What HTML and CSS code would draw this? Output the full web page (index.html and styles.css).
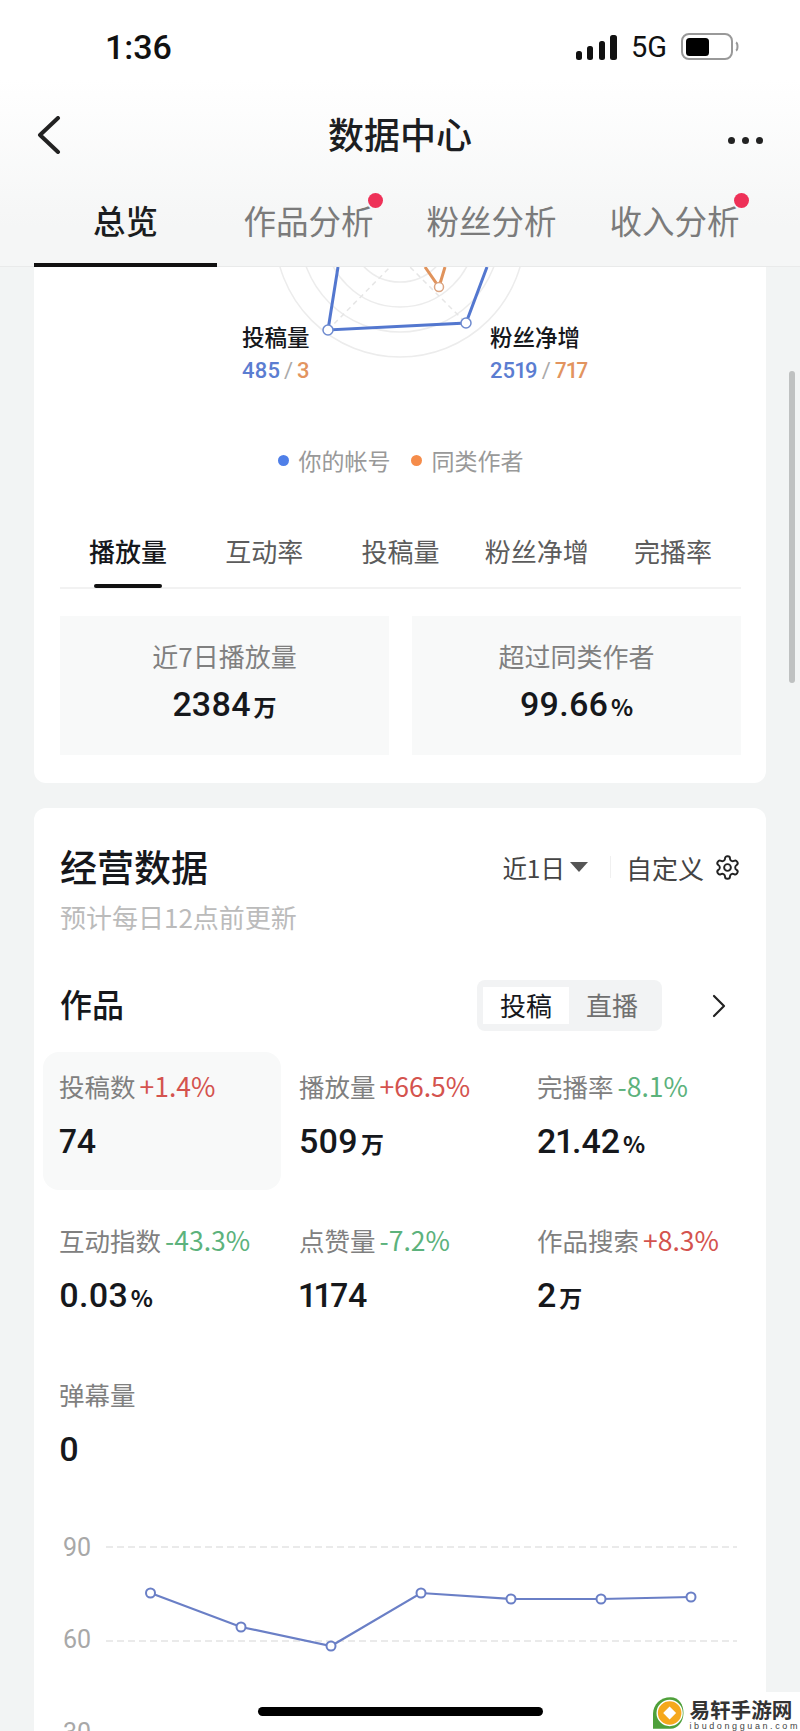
FILE: index.html
```html
<!DOCTYPE html>
<html lang="zh-CN">
<head>
  <meta charset="UTF-8" />
  <meta name="viewport" content="width=device-width, initial-scale=1.0" />
  <title>数据中心</title>
  <link rel="stylesheet" href="styles.css">
</head>
<body>
  <header class="top">
    <div class="status">
      <span class="time">1:36</span>
      <div class="status-right">
        <svg class="signal" width="41" height="25" viewBox="0 0 41 25">
          <rect x="0" y="16" width="6" height="9" rx="2.5" />
          <rect x="11" y="11" width="6" height="14" rx="2.5" />
          <rect x="23" y="6" width="6" height="19" rx="2.5" />
          <rect x="34" y="0" width="7" height="25" rx="2.5" />
        </svg>
        <span class="net">5G</span>
        <svg class="battery" width="58" height="28" viewBox="0 0 58 28">
          <rect x="1" y="1" width="50" height="25" rx="7" fill="none" stroke="#999" stroke-width="2" />
          <rect x="5" y="5" width="23" height="18" rx="3.5" fill="#000" />
          <path d="M55 9.5c2 1 2 7 0 8" fill="none" stroke="#999" stroke-width="2" />
        </svg>
      </div>
    </div>
    <nav class="nav">
      <svg class="back" width="24" height="38" viewBox="0 0 24 38">
        <path d="M21 2 3 19l18 17" fill="none" stroke="#222" stroke-width="4" stroke-linecap="round" stroke-linejoin="round" />
      </svg>
      <h1>数据中心</h1>
      <div class="more"><i></i><i></i><i></i></div>
    </nav>
    <div class="tabs">
      <a class="tab active">总览</a>
      <a class="tab"><span class="dotted">作品分析</span></a>
      <a class="tab">粉丝分析</a>
      <a class="tab"><span class="dotted">收入分析</span></a>
    </div>
  </header>

  <main class="page">
    <section class="card first">
      <div class="radar">
        <svg width="732" height="173" viewBox="0 0 732 173">
          <g fill="none" stroke="#ececec" stroke-width="1.5">
            <circle cx="366" cy="-35" r="125" />
            <circle cx="366" cy="-35" r="100" />
            <circle cx="366" cy="-35" r="75" />
            <circle cx="366" cy="-35" r="50" />
          </g>
          <path d="M294 63 366 -10 432 56" fill="none" stroke="#e6e6e6" stroke-width="1.5" stroke-dasharray="5 4" />
          <path d="M391 0 405 20 411 0" fill="none" stroke="#e0935c" stroke-width="3" />
          <circle cx="405" cy="20" r="4.5" fill="#fff" stroke="#dba583" stroke-width="1.5" />
          <path d="M304 0 294 63 432 56 453 0" fill="none" stroke="#5377cf" stroke-width="3" />
          <circle cx="294" cy="63" r="5" fill="#fff" stroke="#6f8bcf" stroke-width="1.5" />
          <circle cx="432" cy="56" r="5" fill="#fff" stroke="#6f8bcf" stroke-width="1.5" />
        </svg>
        <div class="axis axis-left">
          <b>投稿量</b>
          <p><span class="blue">485</span><span class="slash">/</span><span class="orange">3</span></p>
        </div>
        <div class="axis axis-right">
          <b>粉丝净增</b>
          <p><span class="blue">2519</span><span class="slash">/</span><span class="orange">717</span></p>
        </div>
      </div>

      <div class="legend">
        <span class="legend-item"><i class="dot dot-blue"></i>你的帐号</span>
        <span class="legend-item"><i class="dot dot-orange"></i>同类作者</span>
      </div>

      <div class="metric-tabs">
        <a class="metric-tab active">播放量</a>
        <a class="metric-tab">互动率</a>
        <a class="metric-tab">投稿量</a>
        <a class="metric-tab">粉丝净增</a>
        <a class="metric-tab">完播率</a>
      </div>

      <div class="stats">
        <div class="stat">
          <p class="stat-label">近7日播放量</p>
          <p class="value">2384<small>万</small></p>
        </div>
        <div class="stat">
          <p class="stat-label">超过同类作者</p>
          <p class="value">99.66<small>%</small></p>
        </div>
      </div>
    </section>

    <section class="card second">
      <div class="card-head">
        <h2>经营数据</h2>
        <div class="filters">
          <span class="period">近1日</span>
          <i class="caret"></i>
          <i class="divider"></i>
          <span>自定义</span>
          <svg class="gear" width="27" height="27" viewBox="0 0 24 24" fill="none" stroke="#222" stroke-width="1.7" stroke-linejoin="round">
            <path d="M12.22 2h-.44a2 2 0 0 0-2 2v.18a2 2 0 0 1-1 1.73l-.43.25a2 2 0 0 1-2 0l-.15-.08a2 2 0 0 0-2.73.73l-.22.38a2 2 0 0 0 .73 2.73l.15.1a2 2 0 0 1 1 1.72v.51a2 2 0 0 1-1 1.74l-.15.09a2 2 0 0 0-.73 2.73l.22.38a2 2 0 0 0 2.73.73l.15-.08a2 2 0 0 1 2 0l.43.25a2 2 0 0 1 1 1.73V20a2 2 0 0 0 2 2h.44a2 2 0 0 0 2-2v-.18a2 2 0 0 1 1-1.73l.43-.25a2 2 0 0 1 2 0l.15.08a2 2 0 0 0 2.73-.73l.22-.39a2 2 0 0 0-.73-2.73l-.15-.08a2 2 0 0 1-1-1.74v-.5a2 2 0 0 1 1-1.74l.15-.09a2 2 0 0 0 .73-2.73l-.22-.38a2 2 0 0 0-2.73-.73l-.15.08a2 2 0 0 1-2 0l-.43-.25a2 2 0 0 1-1-1.73V4a2 2 0 0 0-2-2z" />
            <circle cx="12" cy="12" r="3" />
          </svg>
        </div>
      </div>
      <p class="updated">预计每日12点前更新</p>

      <div class="works-head">
        <h3>作品</h3>
        <div class="segment">
          <a class="seg active">投稿</a>
          <a class="seg">直播</a>
        </div>
        <svg class="chevron" width="14" height="24" viewBox="0 0 14 24">
          <path d="M2 2l10 10L2 22" fill="none" stroke="#222" stroke-width="2.2" stroke-linecap="round" stroke-linejoin="round" />
        </svg>
      </div>

      <div class="grid">
        <div class="cell selected">
          <p class="cell-label">投稿数<span class="up">+1.4%</span></p>
          <p class="value">74</p>
        </div>
        <div class="cell">
          <p class="cell-label">播放量<span class="up">+66.5%</span></p>
          <p class="value">509<small>万</small></p>
        </div>
        <div class="cell">
          <p class="cell-label">完播率<span class="down">-8.1%</span></p>
          <p class="value">21.42<small>%</small></p>
        </div>
        <div class="cell">
          <p class="cell-label">互动指数<span class="down">-43.3%</span></p>
          <p class="value">0.03<small>%</small></p>
        </div>
        <div class="cell">
          <p class="cell-label">点赞量<span class="down">-7.2%</span></p>
          <p class="value">1174</p>
        </div>
        <div class="cell">
          <p class="cell-label">作品搜索<span class="up">+8.3%</span></p>
          <p class="value">2<small>万</small></p>
        </div>
        <div class="cell">
          <p class="cell-label">弹幕量</p>
          <p class="value">0</p>
        </div>
      </div>

      <svg class="chart" width="679" height="233" viewBox="0 0 679 233">
        <g class="chart-axis">
          <text x="2" y="58">90</text>
          <text x="2" y="150">60</text>
          <text x="2" y="243">30</text>
        </g>
        <path d="M45 49H676M45 143H676" stroke="#e4e4e4" stroke-width="1.5" stroke-dasharray="7 4" />
        <polyline points="89.5,95 180,129 270,148 360,95 450,101 540,101 630,99" fill="none" stroke="#6a7fc6" stroke-width="2.2" />
        <g fill="#fff" stroke="#6a7fc6" stroke-width="2">
          <circle cx="89.5" cy="95" r="4.5" />
          <circle cx="180" cy="129" r="4.5" />
          <circle cx="270" cy="148" r="4.5" />
          <circle cx="360" cy="95" r="4.5" />
          <circle cx="450" cy="101" r="4.5" />
          <circle cx="540" cy="101" r="4.5" />
          <circle cx="630" cy="99" r="4.5" />
        </g>
      </svg>
    </section>
  </main>

  <div class="scrollbar"></div>
  <div class="home-bar"></div>

  <div class="watermark">
    <svg width="34" height="34" viewBox="0 0 34 34">
      <path d="M19 0C8 0 0 8 0 18v16h19c8 0 14-8 14-17S28 0 19 0z" fill="#4ea03a" />
      <circle cx="18" cy="17" r="13.5" fill="#f5a81c" stroke="#fff" stroke-width="1.5" />
      <path d="M18 10l7 7-7 7-7-7z" fill="#fff" />
    </svg>
    <div class="wm-text">
      <b>易轩手游网</b>
      <span>ibudongguan.com</span>
    </div>
  </div>
</body>
</html>
```

FILE: styles.css
```css
:root {
  --page-bg: #f2f4f4;
  --box-bg: #f8f9f9;
  --text: #16181c;
  --muted: #808080;
  --blue: #5b7dd1;
  --orange: #e2945f;
  --up: #d4534e;
  --down: #5cb27c;
}

* {
  box-sizing: border-box;
}

html,
body {
  margin: 0;
  height: 1731px;
  overflow: hidden;
}

body {
  position: relative;
  font-family: "Noto Sans CJK SC", "Liberation Sans", sans-serif;
  background-color: var(--page-bg);
  color: var(--text);
}

p,
h1,
h2,
h3 {
  margin: 0;
  font-weight: 500;
}

/* header */
.top {
  position: relative;
  z-index: 5;
  height: 267px;
  background: linear-gradient(#fff 30%, #f5f6f6 85%);
  border-bottom: 1px solid #e9eaea;
}

.status {
  display: flex;
  align-items: center;
  justify-content: space-between;
  height: 94px;
  padding: 0 61px 0 105px;
}

.time {
  font-family: Roboto, sans-serif;
  font-size: 34px;
  font-weight: 500;
  color: #111;
}

.status-right {
  display: flex;
  align-items: center;
}

.signal {
  fill: #111;
}

.net {
  margin: 0 14px;
  font-family: Roboto, sans-serif;
  font-size: 29px;
  color: #111;
}

.nav {
  position: relative;
  display: flex;
  align-items: center;
  justify-content: center;
  height: 82px;
  padding-bottom: 4px;
}

.nav h1 {
  font-size: 36px;
  color: #1c1e22;
}

.back {
  position: absolute;
  left: 37px;
  top: 22px;
}

.more {
  position: absolute;
  right: 37px;
  top: 43px;
  display: flex;
  gap: 7px;
}

.more i {
  width: 7px;
  height: 7px;
  border-radius: 50%;
  background-color: #222;
}

.tabs {
  display: grid;
  grid-template-columns: repeat(4, 183px);
  height: 91px;
  padding-left: 34px;
}

.tab {
  display: flex;
  align-items: center;
  justify-content: center;
  padding-bottom: 4px;
  font-size: 32.5px;
  color: #7b7b7b;
}

.tab.active {
  padding-bottom: 0;
  color: #1b1d20;
  font-weight: 500;
  border-bottom: 4px solid #111;
}

.dotted {
  position: relative;
}

.dotted::after {
  content: "";
  position: absolute;
  top: -3px;
  right: -9px;
  width: 15px;
  height: 15px;
  border-radius: 50%;
  background-color: #ee3158;
}

/* cards */
.card {
  margin: 0 34px;
  padding: 0 25px 0 26px;
  background-color: #fff;
}

.first {
  padding-bottom: 28px;
  border-radius: 0 0 12px 12px;
}

.second {
  margin-top: 25px;
  padding-top: 34px;
  border-radius: 12px 12px 0 0;
}

.radar {
  position: relative;
  height: 173px;
  margin: 0 -25px 0 -26px;
}

.radar svg {
  display: block;
}

.axis {
  position: absolute;
  top: 53px;
  white-space: nowrap;
}

.axis-left {
  left: 208px;
}

.axis-right {
  left: 456px;
}

.axis b {
  display: block;
  font-size: 22.5px;
  line-height: 32px;
  font-weight: 500;
}

.axis p {
  margin-top: 3px;
  font-family: Roboto, sans-serif;
  font-size: 22px;
  line-height: 32px;
  font-variant-numeric: proportional-nums;
}

.blue {
  color: var(--blue);
}

.orange {
  color: var(--orange);
}

.slash {
  margin: 0 4px;
  color: #aaa;
  font-weight: 400;
}

.legend {
  display: flex;
  justify-content: center;
  gap: 20px;
  height: 44px;
  padding-bottom: 4px;
  align-items: center;
  font-size: 23px;
  color: #999;
}

.legend-item {
  display: flex;
  align-items: center;
  gap: 10px;
}

.dot {
  width: 11px;
  height: 11px;
  border-radius: 50%;
}

.dot-blue {
  background-color: #4f7fe8;
}

.dot-orange {
  background-color: #f58c4a;
}

.metric-tabs {
  display: grid;
  grid-template-columns: repeat(5, 1fr);
  height: 74px;
  margin-top: 31px;
  border-bottom: 2px solid #f2f2f2;
}

.metric-tab {
  position: relative;
  display: flex;
  align-items: center;
  justify-content: center;
  padding-bottom: 2px;
  font-size: 26px;
  color: #5c5c5c;
}

.metric-tab.active {
  color: var(--text);
  font-weight: 500;
}

.metric-tab.active::after {
  content: "";
  position: absolute;
  left: 34px;
  bottom: -1px;
  width: 68px;
  height: 4px;
  border-radius: 2px;
  background-color: #111;
}

.stats {
  display: grid;
  grid-template-columns: 329px 329px;
  gap: 23px;
  margin-top: 27px;
}

.stat {
  display: flex;
  flex-direction: column;
  align-items: center;
  height: 139px;
  padding-top: 22px;
  background-color: var(--box-bg);
}

.stat-label {
  font-size: 26px;
  line-height: 36px;
  font-weight: 400;
  color: var(--muted);
}

.value {
  font-family: Roboto, sans-serif;
  font-size: 34px;
  line-height: 36px;
  font-weight: 500;
  font-variant-numeric: proportional-nums;
  color: var(--text);
}

.value small {
  margin-left: 3px;
  font-family: "Noto Sans CJK SC", sans-serif;
  font-size: 23px;
  font-weight: 700;
}

.stat .value {
  margin-top: 12px;
}

.card-head {
  display: flex;
  align-items: center;
  justify-content: space-between;
  height: 50px;
}

.card-head h2 {
  padding-bottom: 2px;
  font-size: 37px;
}

.filters {
  display: flex;
  align-items: center;
  font-size: 26px;
  color: #444;
}

.period {
  font-size: 24.5px;
}

.caret {
  width: 0;
  height: 0;
  margin-left: 5px;
  border-style: solid;
  border-width: 10px 9px 0;
  border-color: #555 transparent transparent;
}

.divider {
  width: 1px;
  height: 22px;
  margin: 0 15px 0 22px;
  background-color: #f0f0f0;
}

.gear {
  margin-left: 10px;
}

.updated {
  margin-top: 7px;
  font-size: 26px;
  line-height: 36px;
  font-weight: 400;
  color: #bbb;
}

.works-head {
  display: flex;
  align-items: center;
  height: 51px;
  margin-top: 45px;
}

.works-head h3 {
  margin-right: auto;
  padding-bottom: 6px;
  font-size: 32px;
}

.segment {
  display: flex;
  width: 185px;
  height: 51px;
  padding: 7px 6px;
  border-radius: 8px;
  background-color: #f2f3f4;
}

.seg {
  display: flex;
  align-items: center;
  justify-content: center;
  width: 86px;
  padding-bottom: 3px;
  font-size: 26px;
  color: #707070;
}

.seg.active {
  background-color: #fff;
  color: var(--text);
}

.chevron {
  margin: 0 15px 0 50px;
}

.grid {
  display: grid;
  grid-template-columns: 240px 238px 238px;
  grid-auto-rows: 138px;
  row-gap: 16px;
  margin: 21px 0 0 -17px;
}

.cell {
  padding: 16px 0 0 16px;
  border-radius: 16px;
}

.cell.selected {
  margin-right: 2px;
  background-color: var(--box-bg);
}

.cell-label {
  font-size: 25.5px;
  line-height: 36px;
  font-weight: 400;
  white-space: nowrap;
  color: var(--muted);
}

.cell .value {
  margin-top: 19px;
}

.up,
.down {
  margin-left: 4px;
  font-size: 26.5px;
}

.up {
  color: var(--up);
}

.down {
  color: var(--down);
}

.chart {
  display: block;
  margin-left: 1px;
}

.chart-axis {
  font-family: Roboto, sans-serif;
  font-size: 25px;
  fill: #a8a8a8;
}

/* things on top of the page */
.scrollbar {
  position: absolute;
  top: 371px;
  right: 5px;
  width: 6px;
  height: 312px;
  border-radius: 3px;
  background-color: #bfc1c1;
}

.home-bar {
  position: absolute;
  left: 258px;
  top: 1707px;
  width: 285px;
  height: 9px;
  border-radius: 5px;
  background-color: #000;
}

.watermark {
  position: absolute;
  right: 0;
  bottom: 0;
  display: flex;
  align-items: flex-start;
  gap: 5px;
  width: 147px;
  height: 39px;
  padding-top: 4px;
  background-color: #fff;
}

.wm-text {
  display: flex;
  flex-direction: column;
}

.wm-text b {
  font-size: 20.6px;
  line-height: 26px;
  font-weight: 700;
  color: #333;
  white-space: nowrap;
}

.wm-text span {
  font-family: "Liberation Sans", sans-serif;
  font-size: 9px;
  line-height: 9px;
  letter-spacing: 2.6px;
  color: #444;
  white-space: nowrap;
}
```
